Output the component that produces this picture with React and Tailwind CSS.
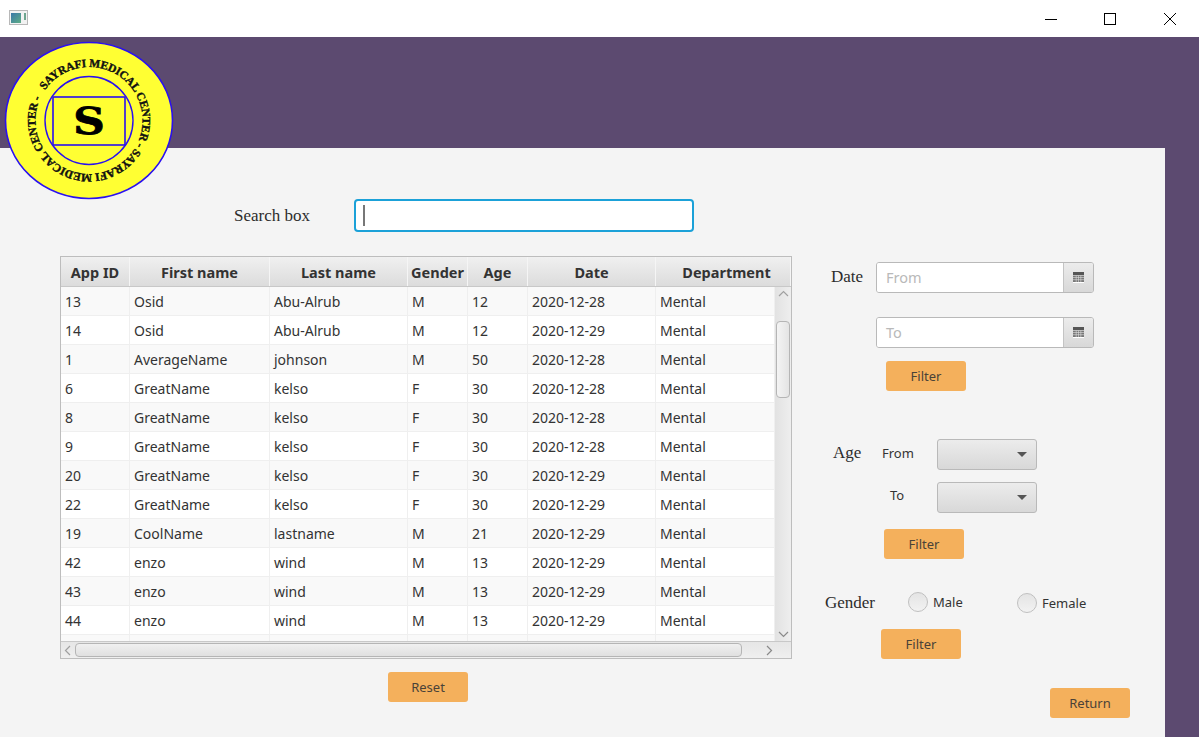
const rows = [
  ["13","Osid","Abu-Alrub","M","12","2020-12-28"],
  ["14","Osid","Abu-Alrub","M","12","2020-12-29"],
  ["1","AverageName","johnson","M","50","2020-12-28"],
  ["6","GreatName","kelso","F","30","2020-12-28"],
  ["8","GreatName","kelso","F","30","2020-12-28"],
  ["9","GreatName","kelso","F","30","2020-12-28"],
  ["20","GreatName","kelso","F","30","2020-12-29"],
  ["22","GreatName","kelso","F","30","2020-12-29"],
  ["19","CoolName","lastname","M","21","2020-12-29"],
  ["42","enzo","wind","M","13","2020-12-29"],
  ["43","enzo","wind","M","13","2020-12-29"],
  ["44","enzo","wind","M","13","2020-12-29"],
  ["","","","","",""],
];

const headers = [
  ["App ID", "w-[69px]"],
  ["First name", "w-[140px]"],
  ["Last name", "w-[138px]"],
  ["Gender", "w-[60px]"],
  ["Age", "w-[60px]"],
  ["Date", "w-[128px]"],
  ["Department", "w-[135px] pl-[7px]"],
];
const cellWidths = ["w-[69px]", "w-[140px]", "w-[138px]", "w-[60px]", "w-[60px]", "w-[128px]", "w-[119px]"];

function Logo() {
  return (
    <svg className="absolute left-[4px] top-[41px]" width="171" height="160" viewBox="0 0 171 160">
      <defs>
        <path id="ring" d="M 85 26 A 53.5 53.5 0 1 1 84.99 26" />
      </defs>
      <ellipse cx="85" cy="79.5" rx="83.5" ry="78" fill="#ffff33" stroke="#2a10f0" strokeWidth="1.6" />
      <circle cx="85" cy="79.5" r="44" fill="none" stroke="#2a10f0" strokeWidth="1.4" />
      <rect x="49" y="56" width="72" height="48" fill="none" stroke="#2a10f0" strokeWidth="1.6" />
      <g transform="rotate(-55.6 85 79.5)">
        <text
          fontFamily="'Liberation Serif', serif"
          fontWeight="700"
          fontSize="11.5"
          letterSpacing="-0.15"
          fill="#111"
          stroke="#111"
          strokeWidth="0.4"
        >
          <textPath href="#ring" startOffset="0">
            SAYRAFI MEDICAL CENTER - SAYRAFI MEDICAL CENTER -
          </textPath>
        </text>
      </g>
      <text
        transform="translate(85 93) scale(1.15 1)"
        textAnchor="middle"
        fontFamily="'DejaVu Serif', serif"
        fontWeight="700"
        fontSize="38"
        fill="#000"
        stroke="#000"
        strokeWidth="0.8"
      >
        S
      </text>
    </svg>
  );
}

function TitleBar() {
  return (
    <div className="h-[37px] bg-white flex items-center justify-between shrink-0">
      <svg className="ml-[9px] mb-[2px]" width="20" height="16" viewBox="0 0 20 16">
        <rect x="0.5" y="0.5" width="18" height="14" fill="#f2f2f2" stroke="#b8b8b8" />
        <defs>
          <linearGradient id="ic" x1="0" y1="0" x2="1" y2="1">
            <stop offset="0" stopColor="#3a78a8" />
            <stop offset="1" stopColor="#5fae86" />
          </linearGradient>
        </defs>
        <rect x="2" y="3" width="10" height="10" fill="url(#ic)" />
        <rect x="15" y="3" width="2" height="7" fill="#6fa58f" />
      </svg>
      <div className="flex items-center">
        <svg className="mr-[47px]" width="12" height="12" viewBox="0 0 12 12">
          <path d="M0 6.5H12" stroke="#000" strokeWidth="1" />
        </svg>
        <svg className="mr-[48px]" width="12" height="12" viewBox="0 0 12 12">
          <rect x="0.5" y="0.5" width="11" height="11" fill="none" stroke="#000" />
        </svg>
        <svg className="mr-[23px]" width="12" height="12" viewBox="0 0 12 12">
          <path d="M0 0L12 12M12 0L0 12" stroke="#000" strokeWidth="1" />
        </svg>
      </div>
    </div>
  );
}

function Table() {
  return (
    <div className="w-[732px] h-[403px] border border-[#bdbdbd] bg-[#f4f4f4] flex flex-col overflow-hidden">
      <div className="flex h-[30px] shrink-0 border-b border-[#c8c8c8] bg-gradient-to-b from-[#f0f0f0] to-[#dcdcdc]">
        {headers.map(([t, w]) => (
          <div key={t} className={`${w} shrink-0 flex items-center justify-center pt-[2px] border-r border-[#f5f5f5] text-[14.5px] font-bold text-[#333]`}>
            {t}
          </div>
        ))}
      </div>
      <div className="flex h-[354px] shrink-0">
        <div className="w-[714px] h-full overflow-hidden bg-white">
          {rows.map((r, i) => (
            <div key={i} className={`flex h-[29px] border-b border-[#efefef] ${i % 2 === 0 ? "bg-[#f9f9f9]" : "bg-white"}`}>
              {cellWidths.map((w, j) => (
                <div key={j} className={`${w} shrink-0 pl-[4px] flex items-center border-r border-[#efefef] text-[14px] text-[#333]`}>
                  {j === 6 ? (r[0] ? "Mental" : "") : r[j]}
                </div>
              ))}
            </div>
          ))}
        </div>
        <div className="w-[16px] h-full bg-gradient-to-r from-[#e2e2e2] to-[#eeeeee] flex flex-col items-center relative">
          <svg className="mt-[3px]" width="11" height="7" viewBox="0 0 11 7">
            <path d="M1 6L5.5 1.5L10 6" fill="none" stroke="#a0a0a0" strokeWidth="1.2" />
          </svg>
          <div className="mt-[24px] w-[14px] h-[77px] rounded-[4px] border border-[#b5b5b5] bg-gradient-to-r from-[#f4f4f4] to-[#e4e4e4]" />
          <svg className="mt-auto mb-[3px]" width="11" height="7" viewBox="0 0 11 7">
            <path d="M1 1L5.5 5.5L10 1" fill="none" stroke="#8a8a8a" strokeWidth="1.2" />
          </svg>
        </div>
      </div>
      <div className="flex-1 flex items-center border-t border-[#c8c8c8] bg-gradient-to-b from-[#e6e6e6] to-[#efefef]">
        <svg className="ml-[3px]" width="7" height="11" viewBox="0 0 7 11">
          <path d="M6 1L1.5 5.5L6 10" fill="none" stroke="#a0a0a0" strokeWidth="1.2" />
        </svg>
        <div className="ml-[4px] w-[667px] h-[14px] rounded-[4px] border border-[#b5b5b5] bg-gradient-to-b from-[#f0f0f0] to-[#e0e0e0]" />
        <svg className="ml-[24px]" width="7" height="11" viewBox="0 0 7 11">
          <path d="M1 1L5.5 5.5L1 10" fill="none" stroke="#8a8a8a" strokeWidth="1.2" />
        </svg>
      </div>
    </div>
  );
}

function OrangeButton({ children, className = "" }) {
  return (
    <div className={`w-[80px] h-[30px] pt-[1px] rounded-[3px] bg-[#f4b05c] flex items-center justify-center text-[13px] text-[#4a4238] ${className}`}>
      {children}
    </div>
  );
}

function DateField({ placeholder, className = "" }) {
  return (
    <div className={`flex h-[31px] w-[218px] rounded-[3px] border border-[#b9b9b9] overflow-hidden ${className}`}>
      <div className="flex-1 bg-white flex items-center pl-[9px] text-[14.5px] text-[#b9b9b9]">{placeholder}</div>
      <div className="w-[30px] border-l border-[#c4c4c4] bg-gradient-to-b from-[#ececec] to-[#d8d8d8] flex items-center justify-center">
        <svg width="11" height="11" viewBox="0 0 11 11">
          <rect width="11" height="11" fill="#fff" />
          <rect y="0" width="11" height="3" fill="#555" />
          <path d="M0 3.5H11V10H0Z" fill="#777" />
          <path d="M0 5.5H11M0 7.7H11M3.2 3.5V10M5.5 3.5V10M7.8 3.5V10" stroke="#ddd" strokeWidth="0.6" />
        </svg>
      </div>
    </div>
  );
}

function Select({ className = "" }) {
  return (
    <div className={`w-[100px] h-[31px] rounded-[3px] border border-[#b9b9b9] bg-gradient-to-b from-[#ececec] to-[#d8d8d8] flex items-center justify-end pr-[9px] ${className}`}>
      <svg width="10" height="5" viewBox="0 0 10 5">
        <path d="M0 0H10L5 5Z" fill="#555" />
      </svg>
    </div>
  );
}

function Radio({ className = "" }) {
  return (
    <div className={`w-[20px] h-[20px] rounded-full border border-[#c0c0c0] bg-gradient-to-b from-[#e4e4e4] to-[#f2f2f2] ${className}`} />
  );
}

const serif = "font-['Liberation_Serif',serif] text-[17px] text-[#2c2c2c]";

function RightColumn() {
  return (
    <div className="flex flex-col h-[462px]">
      <div className="flex items-center mt-[6px]">
        <span className={`ml-[39px] w-[45px] -mt-[2px] ${serif}`}>Date</span>
        <DateField placeholder="From" />
      </div>
      <DateField placeholder="To" className="ml-[84px] mt-[24px]" />
      <OrangeButton className="ml-[94px] mt-[13px]">Filter</OrangeButton>

      <div className="flex items-center mt-[48px]">
        <span className={`ml-[41px] w-[49px] -mt-[3px] ${serif}`}>Age</span>
        <span className="w-[55px] -mt-[2px] text-[13px] text-[#333]">From</span>
        <Select />
      </div>
      <div className="flex items-center mt-[12px]">
        <span className="ml-[98px] w-[47px] -mt-[3px] text-[13px] text-[#333]">To</span>
        <Select />
      </div>
      <OrangeButton className="ml-[92px] mt-[16px]">Filter</OrangeButton>

      <div className="flex items-center mt-[34px] h-[20px]">
        <span className={`ml-[33px] w-[83px] ${serif}`}>Gender</span>
        <Radio className="-mt-[2px]" />
        <span className="ml-[5px] w-[84px] -mt-[1px] text-[13px] text-[#333]">Male</span>
        <Radio />
        <span className="ml-[5px] mt-[1px] text-[13px] text-[#333]">Female</span>
      </div>
      <OrangeButton className="ml-[89px] mt-[16px]">Filter</OrangeButton>
      <OrangeButton className="ml-[258px] mt-[29px]">Return</OrangeButton>
    </div>
  );
}

export default function App() {
  return (
    <div className="relative w-[1199px] h-[737px] overflow-hidden flex flex-col bg-[#5c4a70] font-['Noto_Sans',sans-serif]">
      <TitleBar />
      <div className="mt-[111px] w-[1165px] flex-1 bg-[#f4f4f4] pt-[51px]">
        <div className="flex items-center h-[33px]">
          <span className={`ml-[234px] w-[120px] ${serif}`}>Search box</span>
          <div className="w-[340px] h-[33px] rounded-[4px] border-2 border-[#1ba1d8] bg-white flex items-center pl-[7px]">
            <div className="w-[1.5px] h-[21px] bg-[#777]" />
          </div>
        </div>
        <div className="flex mt-[24px] ml-[60px]">
          <div className="flex flex-col">
            <Table />
            <OrangeButton className="ml-[328px] mt-[13px]">Reset</OrangeButton>
          </div>
          <RightColumn />
        </div>
      </div>
      <Logo />
    </div>
  );
}
